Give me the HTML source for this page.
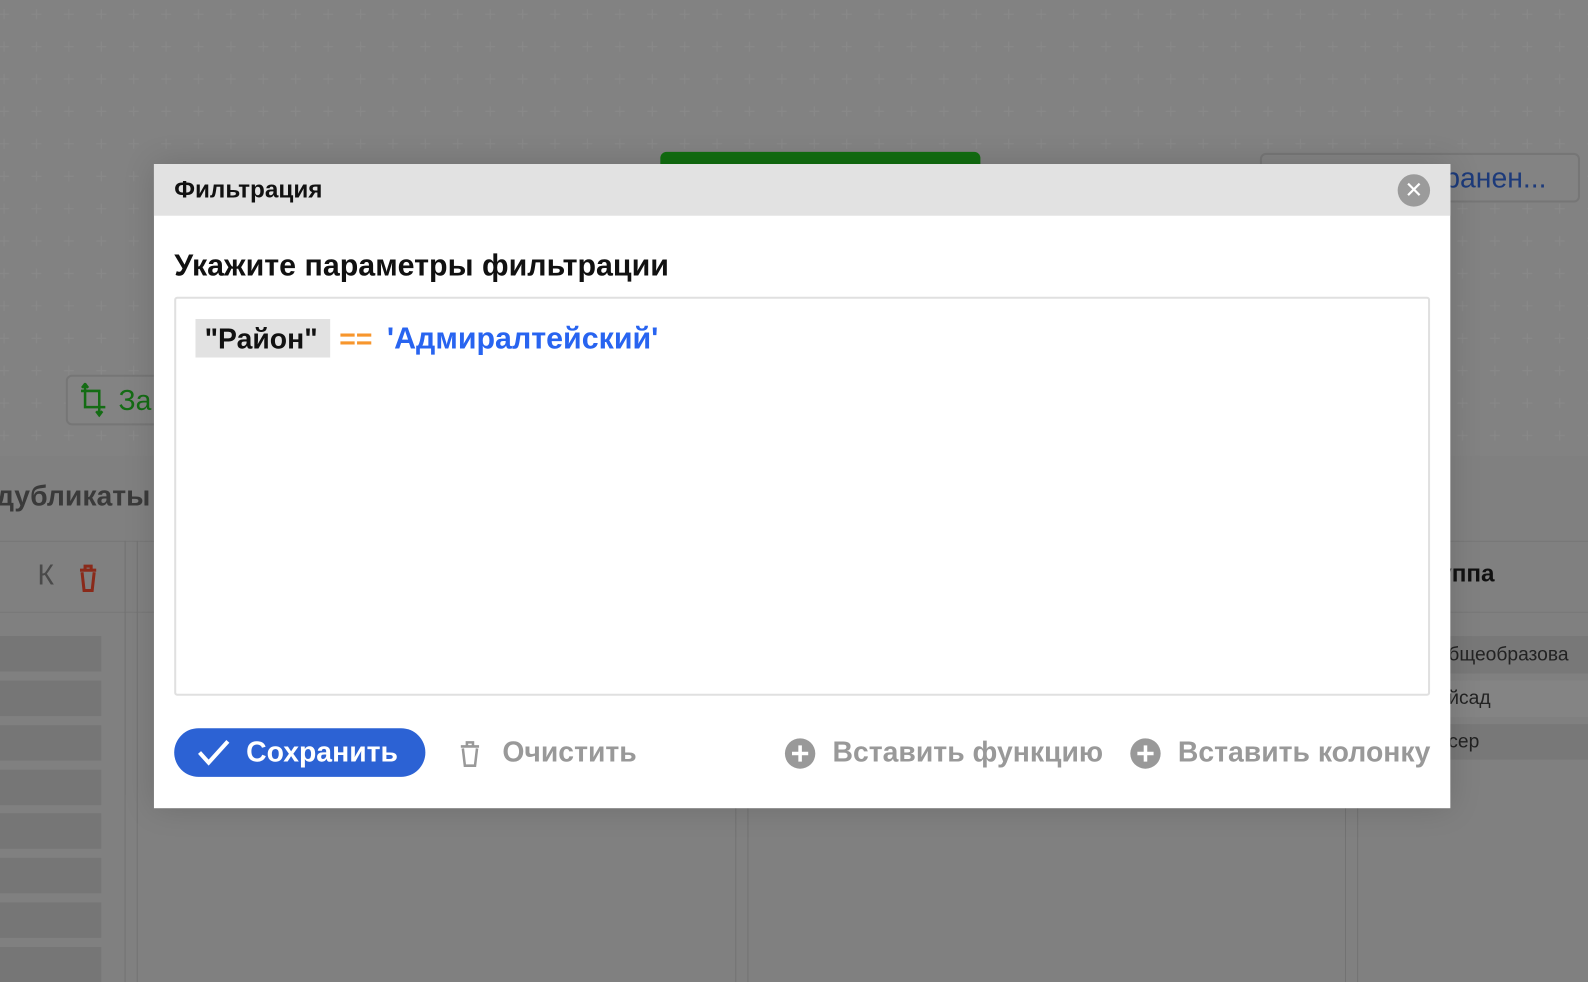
<!DOCTYPE html>
<html><head><meta charset="utf-8"><style>
*{box-sizing:border-box;margin:0;padding:0}
html,body{width:1588px;height:982px;overflow:hidden;background:#808080}
body{font-family:"Liberation Sans","DejaVu Sans",sans-serif;position:relative}
#w{position:absolute;left:0;top:0;width:1568px;height:970px;transform:scale(1.0128);transform-origin:0 0}
.top{position:absolute;left:0;top:0;width:1588px;height:450px;background:#828282}
.grid{position:absolute;left:0;top:0;width:1588px;height:450px}
.abs{position:absolute}
.modal{position:absolute;left:152px;top:162px;width:1280px;height:636px;background:#fff;box-shadow:0 0 30px rgba(0,0,0,.15)}
.hdr{height:51px;background:#e2e2e2;padding:0 20px;font-size:24px;font-weight:bold;line-height:52px;color:#111}
.close{position:absolute;right:20px;top:10px;width:32px;height:32px;border-radius:50%;background:#9b9b9b;color:#fff;text-align:center;line-height:32px;font-size:22px;font-weight:bold}
.sub{position:absolute;left:20px;top:84px;font-size:30px;font-weight:bold;color:#111}
.box{position:absolute;left:20px;top:131px;width:1240px;height:394px;border:2px solid #e0e0e0;border-radius:3px}
.tok{position:absolute;left:19px;top:20px;height:38px;padding:0 9px;background:#e2e2e2;font-size:28px;font-weight:bold;line-height:39px;color:#111;width:133px}
.op{position:absolute;left:161px;top:20px;font-size:28px;font-weight:bold;line-height:39px;color:#f7962d}
.str{position:absolute;left:208px;top:20px;font-size:30px;font-weight:bold;line-height:39px;color:#2864f0}
.save{position:absolute;left:20px;top:557px;width:248px;height:48px;border-radius:24px;background:#2c62d4;color:#fff;font-size:28px;font-weight:bold;line-height:48px;padding-left:71px}
.btn{position:absolute;top:557px;height:48px;line-height:48px;font-size:28px;font-weight:bold;color:#999}
</style></head><body><div id="w">
<div class="top"></div>
<svg class="grid" width="1588" height="450">
<defs><pattern id="p" x="-12" y="-2" width="32" height="32" patternUnits="userSpaceOnUse"><path d="M16 11v10M11 16h10" stroke="#898989" stroke-width="1"/></pattern></defs>
<rect width="1588" height="450" fill="url(#p)"/></svg>
<div class="abs" style="left:652px;top:150px;width:316px;height:20px;background:#116d10;border-radius:6px"></div>
<div class="abs" style="left:1244px;top:151px;width:316px;height:49px;border:2px solid #767676;border-radius:6px;background:#838383;font-size:28px;color:#1c3a7a;line-height:45px;padding-left:180px">ранен...</div>
<div class="abs" style="left:65px;top:370px;width:120px;height:50px;border:2px solid #767676;border-radius:6px;background:#838383;font-size:28px;color:#146c14;line-height:48px;padding-left:50px">За</div>
<svg class="abs" style="left:78px;top:378px" width="30" height="34"><path d="M6 2v22h20M2 8h18v22M3 5l3-4 3 4M17 28l3 4 3-4" stroke="#146c14" stroke-width="2.5" fill="none"/></svg>
<div class="abs" style="left:-4px;top:474px;font-size:28px;font-weight:bold;color:#3a3a3a">дубликаты</div>
<div class="abs" style="left:0;top:534px;width:1588px;height:1px;background:#777"></div>
<div class="abs" style="left:0;top:604px;width:1588px;height:1px;background:#777"></div>
<div class="abs" style="left:123px;top:534px;width:1px;height:448px;background:#727272"></div>
<div class="abs" style="left:135px;top:534px;width:1px;height:448px;background:#727272"></div>
<div class="abs" style="left:726px;top:534px;width:1px;height:448px;background:#727272"></div>
<div class="abs" style="left:738px;top:534px;width:1px;height:448px;background:#727272"></div>
<div class="abs" style="left:1328px;top:534px;width:1px;height:448px;background:#727272"></div>
<div class="abs" style="left:1340px;top:534px;width:1px;height:448px;background:#727272"></div>
<div class="abs" style="left:37px;top:552px;font-size:28px;color:#4a4a4a">К</div>
<svg class="abs" style="left:76px;top:556px" width="22" height="30"><path d="M3 7h16M8 7V3h6v4M5 9l2 18h8l2-18" stroke="#8a2a1a" stroke-width="3" fill="none"/></svg>
<div class="abs" style="left:0;top:628px;width:100px;height:35px;background:#767676"></div>
<div class="abs" style="left:0;top:672px;width:100px;height:35px;background:#767676"></div>
<div class="abs" style="left:0;top:716px;width:100px;height:35px;background:#767676"></div>
<div class="abs" style="left:0;top:760px;width:100px;height:35px;background:#767676"></div>
<div class="abs" style="left:0;top:803px;width:100px;height:35px;background:#767676"></div>
<div class="abs" style="left:0;top:847px;width:100px;height:35px;background:#767676"></div>
<div class="abs" style="left:0;top:891px;width:100px;height:35px;background:#767676"></div>
<div class="abs" style="left:0;top:935px;width:100px;height:35px;background:#767676"></div>
<div class="abs" style="left:1420px;top:553px;font-size:24px;font-weight:bold;color:#111">уппа</div>
<div class="abs" style="left:1400px;top:628px;width:188px;height:37px;background:#787878;font-size:19px;line-height:37px;color:#222;padding-left:30px">бщеобразова</div>
<div class="abs" style="left:1400px;top:672px;width:188px;height:36px;background:#848484;font-size:19px;line-height:36px;color:#222;padding-left:30px">йсад</div>
<div class="abs" style="left:1400px;top:715px;width:188px;height:35px;background:#787878;font-size:19px;line-height:35px;color:#222;padding-left:30px">сер</div>
<div class="modal">
<div class="hdr">Фильтрация</div>
<div class="close">✕</div>
<div class="sub">Укажите параметры фильтрации</div>
<div class="box">
<div class="tok">"Район"</div>
<div class="op">==</div>
<div class="str">'Адмиралтейский'</div>
</div>
<div class="save"><svg class="abs" style="left:22px;top:10px" width="34" height="28"><path d="M3 14l9 10L31 3" stroke="#fff" stroke-width="4" fill="none"/></svg>Сохранить</div>
<svg class="abs" style="left:300px;top:567px" width="24" height="30"><path d="M3 8h18M9 8V4h6v4M5 10l2 17h10l2-17" stroke="#999" stroke-width="2.5" fill="none"/></svg>
<div class="btn" style="left:344px">Очистить</div>
<svg class="abs" style="left:622px;top:566px" width="32" height="32"><circle cx="16" cy="16" r="15" fill="#999"/><path d="M16 8v16M8 16h16" stroke="#fff" stroke-width="3.5"/></svg>
<div class="btn" style="left:670px">Вставить функцию</div>
<svg class="abs" style="left:963px;top:566px" width="32" height="32"><circle cx="16" cy="16" r="15" fill="#999"/><path d="M16 8v16M8 16h16" stroke="#fff" stroke-width="3.5"/></svg>
<div class="btn" style="left:1011px">Вставить колонку</div>
</div>
</div></body></html>
